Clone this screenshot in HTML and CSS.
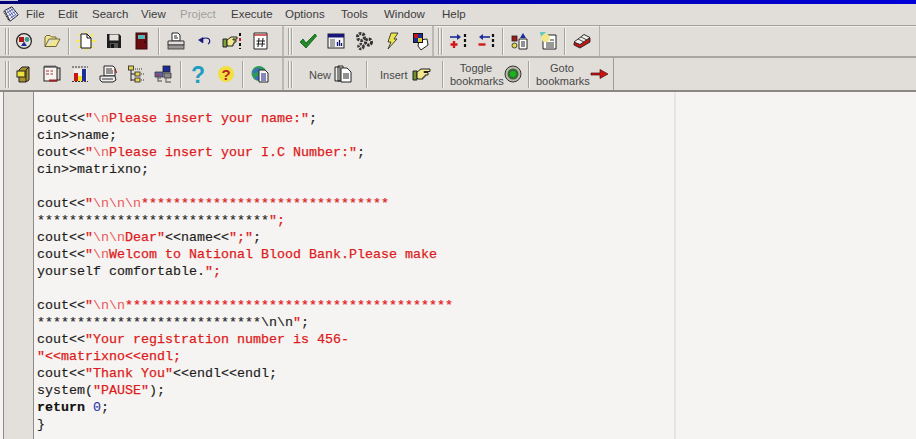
FILE: index.html
```html
<!DOCTYPE html>
<html lang="en">
<head>
<meta charset="utf-8">
<title>Dev-C++</title>
<link rel="stylesheet" href="styles.css">
</head>
<body>
<div class="app">
  <div class="titlebar"><div class="titlebar-stub"></div></div>

  <nav class="menubar">
    <svg class="appicon" viewBox="0 0 20 20"><path d="M3 6 L11 2 L18 11 L9 18 Z" fill="#fff" stroke="#223" stroke-width="1.1"/><path d="M5 5 L12 15 M7 4 L14 14 M9 3 L16 12 M5 9 L13 4 M7 12 L15 7 M9 15 L16 10" stroke="#4450a8" stroke-width=".9" fill="none"/><path d="M2 7 L8 18" stroke="#111" stroke-width="1.6" stroke-dasharray="1 1" fill="none"/></svg>
    <span class="menuitem">File</span>
    <span class="menuitem">Edit</span>
    <span class="menuitem">Search</span>
    <span class="menuitem">View</span>
    <span class="menuitem disabled">Project</span>
    <span class="menuitem">Execute</span>
    <span class="menuitem">Options</span>
    <span class="menuitem">Tools</span>
    <span class="menuitem">Window</span>
    <span class="menuitem">Help</span>
  </nav>

  <div class="toolrow row-one">
    <div class="toolbar">
      <i class="grip"></i>
      <span class="btn"><svg class="ic" viewBox="0 0 20 20"><circle cx="10" cy="10" r="7.4" fill="#e6e2de" stroke="#222" stroke-width="1.2"/><rect x="5" y="6" width="5" height="5" fill="#b01818"/><circle cx="13" cy="8.5" r="2.4" fill="#3a9a8c"/><path d="M7 15 L10 10.5 L13 15 Z" fill="#1c2c98"/></svg></span>
      <span class="btn"><svg class="ic" viewBox="0 0 20 20"><path d="M3 15.5 V6 L4.500 4.500 H8 L9.500 6 H14 V8 H7 L3 15.500 H14 L18 8 H14" fill="#f4e68e" stroke="#6c6a30" stroke-width="1"/></svg></span>
      <i class="sep"></i>
      <span class="btn"><svg class="ic" viewBox="0 0 20 20"><path d="M10 0 V20 M0 10 H20 M3 3 L17 17 M17 3 L3 17" stroke="#f3ea5c" stroke-width="2"/><path d="M5 3 H11 L15 7 V17 H5 Z" fill="#fff" stroke="#111"/><path d="M11 3 V7 H15" fill="none" stroke="#111"/></svg></span>
      <span class="btn"><svg class="ic" viewBox="0 0 20 20"><path d="M3 3 H15 L17 5 V17 H3 Z" fill="#1d1d1d"/><rect x="5.500" y="3.500" width="9" height="6" fill="#e4e2de"/><rect x="6" y="12" width="8" height="5" fill="#555"/><rect x="7" y="13" width="3" height="4" fill="#111"/></svg></span>
      <span class="btn"><svg class="ic" viewBox="0 0 20 20"><rect x="4" y="2" width="11" height="16" fill="#6c0c10" stroke="#3c0608"/><rect x="6" y="4" width="7" height="4" fill="#52b8bc"/><rect x="12" y="10" width="1.500" height="2" fill="#111"/></svg></span>
      <i class="sep"></i>
      <span class="btn"><svg class="ic" viewBox="0 0 20 20"><path d="M6 2 H12 L14 4 V10 H6 Z" fill="#fff" stroke="#222"/><path d="M8 5 H11 M8 7 H12" stroke="#222"/><path d="M2 10 H18 V14 H2 Z" fill="#e2dfda" stroke="#333"/><rect x="2" y="14" width="16" height="4" fill="#9a9894" stroke="#333" stroke-width=".8"/></svg></span>
      <span class="btn"><svg class="ic" viewBox="0 0 20 20"><path d="M9 12 L4.500 9 L9 6.500 Z" fill="#16167c" stroke="#16167c" stroke-width=".6"/><path d="M8 8 Q12 6 15 8 Q17 11 14 13" fill="none" stroke="#16167c" stroke-width="1.100"/></svg></span>
      <span class="btn"><svg class="ic" viewBox="0 0 20 20"><path d="M1 8 H5 V16 H1 Z" fill="#7fa040" stroke="#222"/><path d="M5 9 L9 6 H15 V8 H11 V9 H14 V11 H12 V13 H11 V15 H6 L5 14 Z" fill="#f2e98a" stroke="#222" stroke-width="1"/><path d="M18 2 V18" stroke="#111" stroke-width="2" stroke-dasharray="3 2"/><path d="M18 7 V10" stroke="#c82020" stroke-width="2"/></svg></span>
      <span class="btn"><svg class="ic" viewBox="0 0 20 20"><path d="M4 2 H17 V18 H4 Z" fill="#fff" stroke="#222"/><path d="M4 4 H17" stroke="#c23030" stroke-width="1.500"/><path d="M9 7 L8 16 M13 7 L12 16 M6.500 10 H15 M6.500 13 H15" stroke="#222" stroke-width="1.100"/></svg></span>
    </div>
    <div class="toolbar">
      <i class="grip wide"></i>
      <span class="btn"><svg class="ic" viewBox="0 0 20 20"><path d="M2 11 L5 8 L8 12 L17 3 L18.500 5 L8 17 Z" fill="#1f8a26" stroke="#0d5a12" stroke-width=".8"/></svg></span>
      <span class="btn"><svg class="ic" viewBox="0 0 20 20"><rect x="2" y="3" width="16" height="14" fill="#f4f4f0" stroke="#222"/><rect x="2" y="3" width="16" height="3.500" fill="#16167c"/><path d="M4 9 H9 M4 11 H9 M4 13 H9 M4 15 H9" stroke="#555"/><path d="M11.500 15 V11 M13.500 15 V9 M15.500 15 V12" stroke="#16167c" stroke-width="1.300"/></svg></span>
      <span class="btn"><svg class="ic" viewBox="0 0 20 20"><circle cx="7" cy="6" r="3.500" fill="none" stroke="#3a3a3a" stroke-width="3.200" stroke-dasharray="2.500 1"/><circle cx="14.500" cy="11" r="3" fill="none" stroke="#2c2c2c" stroke-width="3" stroke-dasharray="2.500 1"/><circle cx="7" cy="15.500" r="2.400" fill="none" stroke="#3a3a3a" stroke-width="2.800" stroke-dasharray="2 1"/></svg></span>
      <span class="btn"><svg class="ic" viewBox="0 0 20 20"><path d="M9 2 H16 L12 8 H15 L6 18 L9 11 H6 Z" fill="#ece24a" stroke="#333" stroke-width=".9"/></svg></span>
      <span class="btn"><svg class="ic" viewBox="0 0 20 20"><path d="M9 9 L17 8 L18 14 L11 19 L8 15 Z" fill="#fff" stroke="#222"/><rect x="3" y="2" width="10" height="10" fill="#111"/><rect x="4" y="3" width="4" height="4" fill="#c01818"/><rect x="8" y="3" width="4" height="4" fill="#1c2c98"/><rect x="4" y="7" width="4" height="4" fill="#1c2c98"/><rect x="8" y="7" width="4" height="4" fill="#d8cc30"/></svg></span>
    </div>
    <div class="toolbar last">
      <i class="grip wide"></i>
      <span class="btn"><svg class="ic" viewBox="0 0 20 20"><path d="M2 6 H10" stroke="#1c2c98" stroke-width="1.600"/><path d="M9 3 L13 6 L9 9 Z" fill="#1c2c98"/><path d="M6 10 V17 M2.500 13.500 H9.500" stroke="#d01818" stroke-width="2.400"/><path d="M17 3 V17" stroke="#111" stroke-width="2.200" stroke-dasharray="3 2"/></svg></span>
      <span class="btn"><svg class="ic" viewBox="0 0 20 20"><path d="M6 6 H14" stroke="#1c2c98" stroke-width="1.600"/><path d="M7 3 L3 6 L7 9 Z" fill="#1c2c98"/><path d="M2.500 13.500 H9.500" stroke="#d01818" stroke-width="2.400"/><path d="M17 3 V17" stroke="#111" stroke-width="2.200" stroke-dasharray="3 2"/></svg></span>
      <i class="sep"></i>
      <span class="btn"><svg class="ic" viewBox="0 0 20 20"><rect x="2" y="5" width="5" height="5" fill="#a01c1c" stroke="#222" stroke-width=".8"/><circle cx="4.500" cy="14.500" r="2.500" fill="#e0d850" stroke="#222" stroke-width=".8"/><path d="M9 8 H17 V18 H9 Z" fill="#fff" stroke="#222"/><path d="M11 11 H15 M11 13 H15 M11 15 H15" stroke="#222"/><path d="M10 7 L13 2 L16 7 Z" fill="#1c2c98"/></svg></span>
      <span class="btn"><svg class="ic" viewBox="0 0 20 20"><path d="M5 4 H18 V18 H5 Z" fill="#fff" stroke="#222"/><path d="M8 12 H16 M8 14 H16 M8 16 H16 M12 9 H16" stroke="#333"/><path d="M2 1 H8 L3 6 Z" fill="#62c8c0"/><circle cx="7.500" cy="7" r="4.200" fill="#f0e68a"/></svg></span>
      <i class="sep"></i>
      <span class="btn"><svg class="ic" viewBox="0 0 20 20"><path d="M2 12 L12 4 L18 7 L18 11 L8 17 L2 14 Z" fill="#c01818" stroke="#222" stroke-width=".9"/><path d="M2 11 L12 3.500 L18 6.500 L8 13.500 Z" fill="#f2f0ea" stroke="#222" stroke-width=".9"/><path d="M6 8 L12 11 M9 6 L15 9" stroke="#222" stroke-width=".8"/></svg></span>
    </div>
  </div>

  <div class="toolrow row-two">
    <div class="toolbar">
      <i class="grip"></i>
      <span class="btn"><svg class="ic" viewBox="0 0 20 20"><path d="M5 6 L8 3 H15 V16 L12 18 H5 Z" fill="#a8902c" stroke="#222"/><path d="M12 6 V18 M12 6 L15 3" stroke="#222" fill="none"/><rect x="3" y="7" width="8" height="6" fill="#eee23a" stroke="#222"/></svg></span>
      <span class="btn"><svg class="ic" viewBox="0 0 20 20"><rect x="4" y="4" width="14" height="12" fill="#d4d0c8" stroke="#222"/><rect x="2" y="3" width="13" height="14" fill="#f6f4f0" stroke="#222"/><path d="M3 3 V1.500 M5 3 V1.500 M7 3 V1.500 M9 3 V1.500 M11 3 V1.500 M13 3 V1.500" stroke="#222"/><path d="M4 7 H7 M8.500 7 H11 M4 10 H7 M8.500 10 H11" stroke="#b03030" stroke-width="1.200"/><rect x="7" y="15.500" width="8" height="2" fill="#a02020"/></svg></span>
      <span class="btn"><svg class="ic" viewBox="0 0 20 20"><path d="M2 3 H18 M2 17.500 H18" stroke="#333" stroke-dasharray="2 1"/><rect x="4" y="5" width="13" height="12" fill="#f2f0ec"/><rect x="4" y="9" width="4" height="8" fill="#c81818"/><rect x="8" y="12" width="4" height="5" fill="#f2e22a"/><rect x="12" y="5" width="4" height="12" fill="#1c2c98"/></svg></span>
      <span class="btn"><svg class="ic" viewBox="0 0 20 20"><path d="M6 2 H15 L17 4 V12 H6 Z" fill="#f6f4f0" stroke="#222"/><path d="M8 5 H14 M8 7 H15 M8 9 H15" stroke="#333"/><path d="M2 12 H17 L18 16 L15 18 H4 L2 16 Z" fill="#eee" stroke="#222"/><path d="M4 15 H15" stroke="#333"/><path d="M17 5 L18.500 9" stroke="#a02020" stroke-width="1.400"/></svg></span>
      <span class="btn"><svg class="ic" viewBox="0 0 20 20"><path d="M5 5 V17 M5 10 H10 M5 16 H10" stroke="#222" fill="none"/><rect x="2.500" y="2" width="5" height="4" fill="#e4d650" stroke="#222" stroke-width=".8"/><rect x="9" y="8" width="5" height="4" fill="#e4d650" stroke="#222" stroke-width=".8"/><rect x="9" y="14" width="5" height="4" fill="#e4d650" stroke="#222" stroke-width=".8"/><path d="M15 10 H19 M15 16 H19 M9 5 H16" stroke="#333" stroke-dasharray="1 1"/></svg></span>
      <span class="btn"><svg class="ic" viewBox="0 0 20 20"><rect x="9" y="2" width="7" height="6" fill="#1c2c98" stroke="#222" stroke-width=".8"/><path d="M1 8 H9 V13 H1 Z" fill="#6060a8" stroke="#333" stroke-width=".8"/><path d="M10 9 H17 V14 H10 Z" fill="#8c8c8c" stroke="#333" stroke-width=".8"/><path d="M4 13 V17 H8 M12 14 V18 H17 M3 14 H7" stroke="#777" stroke-width="1.400" fill="none"/><rect x="3" y="10" width="2" height="2" fill="#c03030"/></svg></span>
      <i class="sep"></i>
      <span class="btn"><svg class="ic" viewBox="0 0 20 20"><text class="glyph teal" x="10" y="18.500" text-anchor="middle">?</text></svg></span>
      <span class="btn"><svg class="ic" viewBox="0 0 20 20"><circle cx="10" cy="10" r="8" fill="#f0e040"/><text class="glyph-small red" x="10" y="15.500" text-anchor="middle">?</text></svg></span>
      <i class="sep"></i>
      <span class="btn"><svg class="ic" viewBox="0 0 20 20"><circle cx="9" cy="9.500" r="7.500" fill="#2e9a58"/><path d="M3 7 Q7 3 10 4 Q8 8 6 9 Q4 10 3 8 Z M5 13 Q7 11 9 13 V16 H6 Z" fill="#3c6cc0"/><path d="M9 6 H15 L18 9 V18 H9 Z" fill="#f6f6f6" stroke="#222"/><path d="M11 10 H16 M11 12 H16 M11 14 H16 M11 16 H16" stroke="#16167c"/></svg></span>
    </div>
    <div class="toolbar last tall">
      <i class="grip wide"></i>
      <span class="textbtn new-btn"><span>New</span>
        <svg class="ic" viewBox="0 0 20 20"><path d="M2 3 H7 V17 H2 Z M5 2 H10 V17 H5 Z" fill="#f0eee8" stroke="#222"/><path d="M8 4 H14 L18 8 V18 H8 Z" fill="#fff" stroke="#222"/><path d="M10 10 H16 M10 12 H16 M10 14 H16" stroke="#222"/></svg>
      </span>
      <i class="sep"></i>
      <span class="textbtn insert-btn"><span>Insert</span>
        <svg class="ic" viewBox="0 0 20 20"><path d="M1 7 H5 V16 H1 Z" fill="#6e9030" stroke="#222"/><path d="M5 8 L9 5 H18 V7.500 H12 V8.500 H16 V11 H13 V13 H11 V15 H6 L5 14 Z" fill="#f2e98a" stroke="#222"/></svg>
      </span>
      <i class="sep"></i>
      <span class="textbtn toggle-btn"><span class="stacked">Toggle<br>bookmarks</span>
        <svg class="ic" viewBox="0 0 20 20"><circle cx="10" cy="10" r="8" fill="#b8b8a8" stroke="#333"/><circle cx="10" cy="10" r="5.500" fill="#3a6a3a"/><circle cx="10" cy="10" r="3" fill="#18b818"/></svg>
      </span>
      <i class="sep"></i>
      <span class="textbtn goto-btn"><span class="stacked">Goto<br>bookmarks</span>
        <svg class="ic" viewBox="0 0 20 20"><path d="M1 9 H10 V5.500 L18 10 L10 14.500 V11 H1 Z" fill="#c81414" stroke="#501010" stroke-width=".7"/></svg>
      </span>
    </div>
  </div>

  <main class="editor">
    <div class="gutter"></div>
    <div class="code-pane">
<pre class="code">

cout&lt;&lt;<b>"</b><em>\n</em><b>Please insert your name:"</b>;
cin&gt;&gt;name;
cout&lt;&lt;<b>"</b><em>\n</em><b>Please insert your I.C Number:"</b>;
cin&gt;&gt;matrixno;

cout&lt;&lt;<b>"</b><em>\n\n\n</em><b>*******************************</b>
*****************************<b>";</b>
cout&lt;&lt;<b>"</b><em>\n\n</em><b>Dear"</b>&lt;&lt;name&lt;&lt;<b>";"</b>;
cout&lt;&lt;<b>"</b><em>\n</em><b>Welcom to National Blood Bank.Please make</b>
yourself comfortable.<b>";</b>

cout&lt;&lt;<b>"</b><em>\n\n</em><b>*****************************************</b>
****************************\n\n<b>"</b>;
cout&lt;&lt;<b>"Your registration number is 456-</b>
<b>"&lt;&lt;matrixno&lt;&lt;endl;</b>
cout&lt;&lt;<b>"Thank You"</b>&lt;&lt;endl&lt;&lt;endl;
system(<b>"PAUSE"</b>);
<strong>return</strong> <span class="num">0</span>;
}</pre>
    </div>
    <div class="right-pane"></div>
  </main>
</div>
</body>
</html>
```

FILE: styles.css
```css
* { box-sizing: border-box; }
html, body { margin: 0; padding: 0; }
body { width: 916px; height: 439px; overflow: hidden; background: #e1deda; }

.app { display: flex; flex-direction: column; height: 439px; }

.titlebar {
  height: 4px;
  flex: none;
  background: linear-gradient(90deg, #00007c 0, #0000a8 45%, #0000d8 100%);
}
.titlebar-stub { width: 18px; height: 1px; background: #c8c6d0; }

.menubar {
  height: 22px;
  flex: none;
  display: grid;
  grid-template-columns: 24px 32px 34px 49px 39px 51px 54px 56px 43px 58px auto;
  align-items: center;
  padding: 0 0 2px 2px;
  border-bottom: 1px solid #a3a09b;
  font: 11.5px "Liberation Sans", sans-serif;
  color: #3c3c3c;
  background: #e1deda;
}
.appicon { width: 18px; height: 18px; }
.menuitem.disabled { color: #a09e9c; }

.toolrow { display: flex; flex: none; align-items: stretch; }
.row-one { height: 32px; border-bottom: 2px solid #a9a6a1; box-shadow: inset 0 1px 0 #f2f0ec; }
.row-two { height: 34px; border-bottom: 2px solid #8b8884; }

.toolbar {
  display: flex;
  align-items: center;
  flex: none;
  border-right: 2px solid #bcb9b4;
  width: 284px;
}
.row-one .toolbar { height: 30px; }
.row-one .toolbar + .toolbar { width: 150px; border-right-color: #bcb9b4; }
.row-one .toolbar.last { width: 166px; border-right: 1px solid #b5b2ad; }
.row-two .toolbar { height: 32px; }
.toolbar.tall { width: 330px; border-right: 1px solid #a09d98; }

.grip {
  flex: none;
  width: 10px;
  height: 27px;
  background:
    linear-gradient(90deg, #a6a39e 0 1px, #f2f0ec 1px 2px, transparent 2px 3px, #a6a39e 3px 4px, #f2f0ec 4px 5px, transparent 5px) 5px 0 / 5px 100% no-repeat;
}
.grip.wide { background-position: 4px 0; }

.sep {
  flex: none;
  width: 2px;
  height: 27px;
  margin: 0 2px;
  background: linear-gradient(90deg, #a6a39e 0 1px, #f4f2ee 1px 2px);
}

.btn { flex: none; width: 28px; display: flex; justify-content: center; align-items: center; }
.ic { width: 20px; height: 20px; display: block; flex: none; }

.glyph { font: bold 23px "Liberation Sans", sans-serif; }
.glyph-small { font: bold 15px "Liberation Sans", sans-serif; }
.teal { fill: #1f9cc0; }
.red { fill: #c02020; }

.textbtn {
  flex: none;
  display: flex;
  align-items: center;
  font: 11px/13px "Liberation Sans", sans-serif;
  color: #484848;
  padding-top: 2px;
}
.textbtn .ic { margin-top: -2px; }
.stacked { display: block; width: 52px; text-align: center; }
.new-btn { width: 70px; padding-left: 15px; gap: 2px; }
.insert-btn { width: 70px; padding-left: 10px; gap: 4px; }
.toggle-btn { width: 80px; padding-left: 4px; gap: 1px; }
.goto-btn { width: 81px; padding-left: 4px; gap: 2px; }

.editor { flex: 1; display: flex; min-height: 0; background: #f6f4f2; }
.gutter {
  flex: none;
  background: #e3e0db;
  border-left: 1px solid #8f8c88;
  border-right: 1px solid #8f8c88;
  margin-left: 3px;
  width: 31px;
}
.code-pane { flex: none; width: 642px; border-right: 2px solid #e7e5e2; padding: 1px 0 0 3px; overflow: hidden; }
.right-pane { flex: 1; }

.code {
  margin: 0;
  font: 13.333px/17px "Liberation Mono", monospace;
  color: #1c1c1c;
  white-space: pre;
  -webkit-text-stroke: .15px currentColor;
}
.code b { font-weight: normal; color: #dc1c1c; -webkit-text-stroke: .25px currentColor; }
.code em { font-style: normal; color: #e85a5a; -webkit-text-stroke: 0; }
.code strong { font-weight: bold; color: #111; }
.num { color: #2a3aa8; }
```
